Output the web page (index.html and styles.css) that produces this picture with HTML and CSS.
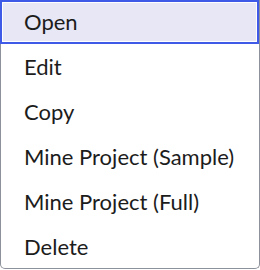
FILE: index.html
```html
<!DOCTYPE html>
<html>
<head>
<meta charset="utf-8">
<link rel="stylesheet" href="styles.css">
</head>
<body>
<ul class="menu">
  <li class="item active">Open</li>
  <li class="item">Edit</li>
  <li class="item">Copy</li>
  <li class="item">Mine Project (Sample)</li>
  <li class="item">Mine Project (Full)</li>
  <li class="item">Delete</li>
</ul>
</body>
</html>
```
FILE: styles.css
```css
html, body {
  margin: 0;
  padding: 0;
  background: #ffffff;
}
.menu {
  list-style: none;
  margin: 0;
  padding: 0;
  width: 260px;
  height: 269px;
  box-sizing: border-box;
  border: 1px solid #8c919b;
  border-top: none;
  border-radius: 0 0 5px 5px;
  display: flex;
  flex-direction: column;
  font-family: Lato, "Open Sans", sans-serif;
  font-size: 22px;
  color: #1c1c1c;
}
.item {
  height: 45px;
  flex: none;
  display: flex;
  align-items: center;
  padding: 0 23px 1px;
  box-sizing: border-box;
}
.item.active {
  height: 44px;
  border: 2px solid #3e5ae6;
  box-shadow: inset 0 0 0 1px #ffffff;
  background: #e7e7f5;
  margin: 0 0 0 -1px;
  width: 259px;
  padding: 0 22px 2px 22px;
}
```
